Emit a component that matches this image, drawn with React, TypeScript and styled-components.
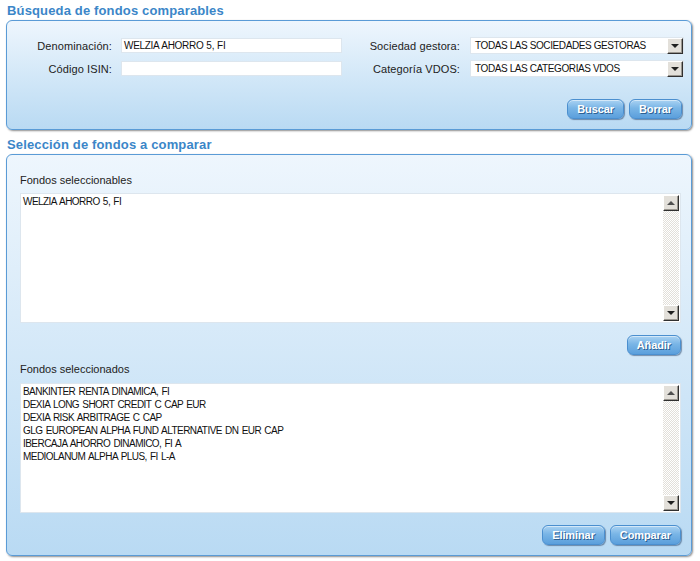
import React from 'react';
import styled, { createGlobalStyle } from 'styled-components';

const GlobalStyle = createGlobalStyle`
	html, body {
		margin: 0;
		padding: 0;
		background: #ffffff;
		font-family: 'Liberation Sans', Arial, sans-serif;
		color: #222222;
	}
`;

const Page = styled.div`
	width: 700px;
	padding: 2px 0 0 6px;
	box-sizing: border-box;
`;

const SectionTitle = styled.h2`
	margin: 0 0 0 1px;
	height: 18px;
	line-height: 18px;
	font-size: 13px;
	font-weight: bold;
	letter-spacing: 0.15px;
	color: #3b86c8;
`;

const Panel = styled.div<{ $height: number }>`
	width: 686px;
	height: ${(p) => p.$height}px;
	box-sizing: border-box;
	border: 1px solid #5a9bd6;
	border-radius: 6px;
	background: linear-gradient(to bottom, #eef6fd 0%, #b9daf3 100%);
	box-shadow: 1px 1px 2px rgba(0, 0, 0, 0.45);
	margin-bottom: 6px;
	display: flex;
	flex-direction: column;
`;

const SearchGrid = styled.div`
	display: grid;
	grid-template-columns: 114px 221px 128px 214px;
	grid-auto-rows: 17px;
	row-gap: 6px;
	padding: 16px 8px 0 0;
	align-items: center;
`;

const Label = styled.label<{ $gap?: number }>`
	text-align: right;
	padding-right: ${(p) => p.$gap ?? 9}px;
	font-size: 11px;
	letter-spacing: 0.1px;
	color: #222;
	white-space: nowrap;
`;

const TextField = styled.div`
	height: 13px;
	background: #fff;
	border: 1px solid #dde6ee;
	font-size: 10px;
	line-height: 13px;
	padding-left: 2px;
	letter-spacing: -0.3px;
	word-spacing: 0.5px;
	color: #111;
`;

const SelectBox = styled.div`
	height: 17px;
	box-sizing: border-box;
	background: #fff;
	border: 1px solid #dde6ee;
	display: flex;
	align-items: center;
	font-size: 10px;
	letter-spacing: -0.4px;
	color: #111;
`;

const SelectText = styled.span`
	flex: 1;
	padding-left: 4px;
`;

const ClassicButton = styled.div`
	width: 16px;
	height: 16px;
	box-sizing: border-box;
	background: #e3e0da;
	border-top: 1px solid #ffffff;
	border-left: 1px solid #ffffff;
	border-right: 1px solid #303030;
	border-bottom: 1px solid #303030;
	box-shadow: inset -1px -1px 0 #9a968f;
	display: flex;
	align-items: center;
	justify-content: center;
	flex-shrink: 0;
`;

const Arrow = styled.span<{ $up?: boolean }>`
	width: 0;
	height: 0;
	border-left: 4px solid transparent;
	border-right: 4px solid transparent;
	${(p) => (p.$up ? 'border-bottom: 4px solid #505050;' : 'border-top: 4px solid #202020;')}
`;

const ButtonRow = styled.div<{ $top: number; $right: number }>`
	display: flex;
	justify-content: flex-end;
	gap: 5px;
	padding: ${(p) => p.$top}px ${(p) => p.$right}px 0 0;
`;

const BlueButton = styled.button`
	height: 20px;
	padding: 0 9px;
	border: 1px solid #4b8fcf;
	border-radius: 6px;
	background: linear-gradient(to bottom, #a9d2f2 0%, #79b5e6 45%, #5b9fdc 100%);
	box-shadow: 1px 1px 1px rgba(40, 70, 110, 0.55), inset 0 1px 0 rgba(255, 255, 255, 0.5);
	color: #fff;
	font-family: 'Liberation Sans', Arial, sans-serif;
	font-size: 11px;
	font-weight: bold;
	letter-spacing: -0.1px;
	text-shadow: 1px 1px 0 #2c5f92;
	cursor: pointer;
`;

const SelectArea = styled.div`
	padding: 0 10px 0 13px;
	display: flex;
	flex-direction: column;
`;

const FieldCaption = styled.div<{ $top: number; $bottom: number }>`
	font-size: 11px;
	color: #222;
	height: 13px;
	line-height: 13px;
	margin: ${(p) => p.$top}px 0 ${(p) => p.$bottom}px 0;
`;

const ListBox = styled.div`
	height: 130px;
	box-sizing: border-box;
	background: #fff;
	border: 1px solid #dde6ee;
	display: flex;
`;

const ListItems = styled.ul`
	flex: 1;
	list-style: none;
	margin: 0;
	padding: 1px 2px;
	font-size: 10px;
	line-height: 13px;
	letter-spacing: -0.55px;
	word-spacing: 1px;
	color: #111;
`;

const Scrollbar = styled.div`
	width: 16px;
	display: flex;
	flex-direction: column;
	margin: 1px 1px 1px 0;
`;

const Track = styled.div`
	flex: 1;
	background: repeating-conic-gradient(#e2dfd9 0 25%, #ffffff 0 50%) 0 0 / 2px 2px;
`;

const ListControl = ({ items }: { items: string[] }) => (
	<ListBox>
		<ListItems>
			{items.map((it) => (
				<li key={it}>{it}</li>
			))}
		</ListItems>
		<Scrollbar>
			<ClassicButton>
				<Arrow $up />
			</ClassicButton>
			<Track />
			<ClassicButton>
				<Arrow />
			</ClassicButton>
		</Scrollbar>
	</ListBox>
);

const Dropdown = ({ value }: { value: string }) => (
	<SelectBox>
		<SelectText>{value}</SelectText>
		<ClassicButton>
			<Arrow />
		</ClassicButton>
	</SelectBox>
);

const selected = [
	'BANKINTER RENTA DINAMICA, FI',
	'DEXIA LONG SHORT CREDIT C CAP EUR',
	'DEXIA RISK ARBITRAGE C CAP',
	'GLG EUROPEAN ALPHA FUND ALTERNATIVE DN EUR CAP',
	'IBERCAJA AHORRO DINAMICO, FI A',
	'MEDIOLANUM ALPHA PLUS, FI L-A',
];

export default function App() {
	return (
		<>
			<GlobalStyle />
			<Page>
				<SectionTitle>Búsqueda de fondos comparables</SectionTitle>
				<Panel $height={110}>
					<SearchGrid>
						<Label>Denominación:</Label>
						<TextField>WELZIA AHORRO 5, FI</TextField>
						<Label $gap={10}>Sociedad gestora:</Label>
						<Dropdown value="TODAS LAS SOCIEDADES GESTORAS" />

						<Label>Código ISIN:</Label>
						<TextField />
						<Label $gap={10}>Categoría VDOS:</Label>
						<Dropdown value="TODAS LAS CATEGORIAS VDOS" />
					</SearchGrid>
					<ButtonRow $top={22} $right={9}>
						<BlueButton>Buscar</BlueButton>
						<BlueButton>Borrar</BlueButton>
					</ButtonRow>
				</Panel>

				<SectionTitle>Selección de fondos a comparar</SectionTitle>
				<Panel $height={402}>
					<SelectArea>
						<FieldCaption $top={19} $bottom={6}>
							Fondos seleccionables
						</FieldCaption>
						<ListControl items={['WELZIA AHORRO 5, FI']} />
						<ButtonRow $top={12} $right={0}>
							<BlueButton>Añadir</BlueButton>
						</ButtonRow>
						<FieldCaption $top={8} $bottom={7}>
							Fondos seleccionados
						</FieldCaption>
						<ListControl items={selected} />
						<ButtonRow $top={12} $right={0}>
							<BlueButton>Eliminar</BlueButton>
							<BlueButton>Comparar</BlueButton>
						</ButtonRow>
					</SelectArea>
				</Panel>
			</Page>
		</>
	);
}
